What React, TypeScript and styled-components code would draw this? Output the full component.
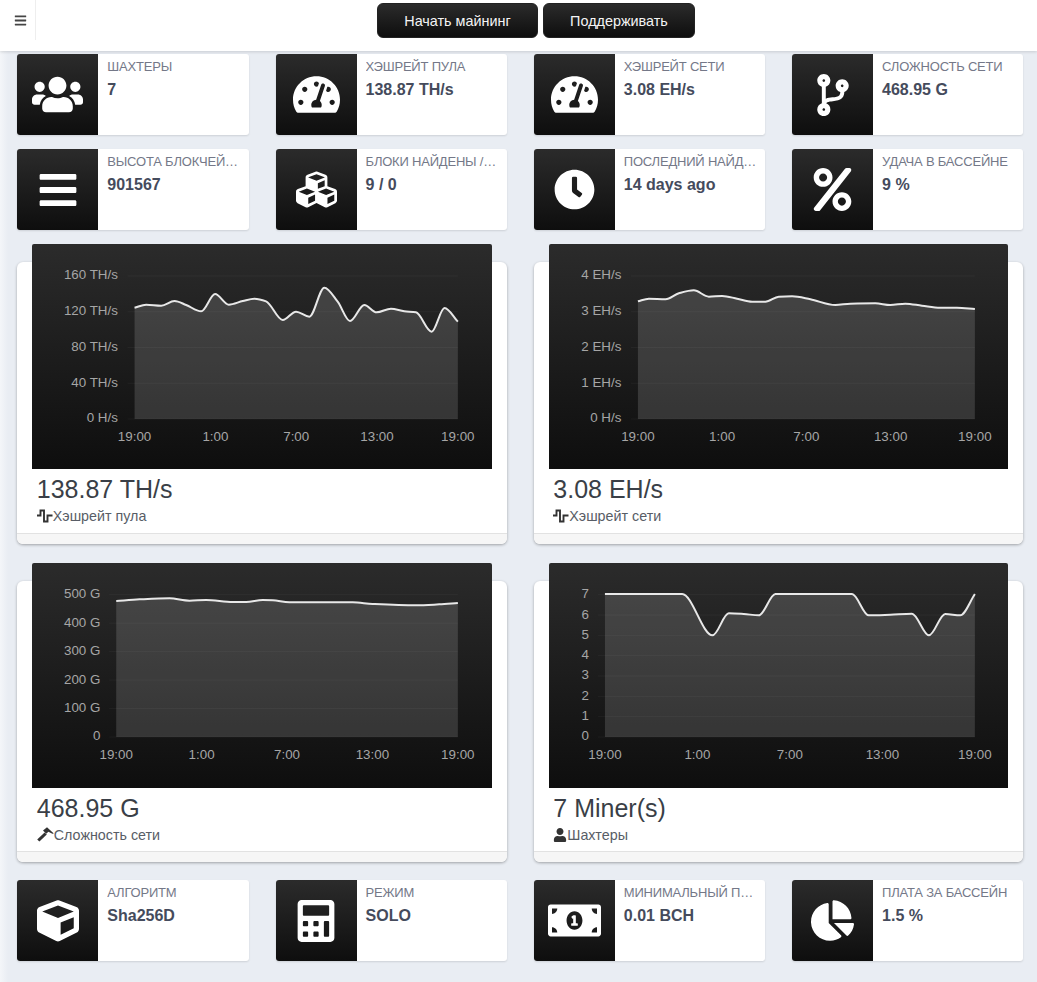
import React from "react";
import styled, { createGlobalStyle } from "styled-components";
import {
  FaBars,
  FaUsers,
  FaTachometerAlt,
  FaCodeBranch,
  FaCubes,
  FaClock,
  FaPercent,
  FaCube,
  FaCalculator,
  FaMoneyBillAlt,
  FaChartPie,
  FaUser,
} from "react-icons/fa";

// styles
const GlobalStyle = createGlobalStyle`
  html, body {
    margin: 0;
    padding: 0;
    min-height: 100%;
  }

  body {
    font-family: "Liberation Sans", Arial, sans-serif;
    background: linear-gradient(to right, #f4f6f9 0, #e9edf3 8px);
  }
`;

const Page = styled.div`
  min-height: 982px;
  display: flex;
  flex-direction: column;
`;

const Header = styled.header`
  height: 51px;
  display: flex;
  background: #fff;
  box-shadow: 0 1px 3px rgba(0, 0, 0, 0.14);
`;

const MenuToggle = styled.div`
  width: 36px;
  height: 40px;
  display: flex;
  align-items: flex-start;
  justify-content: center;
  box-sizing: border-box;
  padding: 14px 0 0 5px;
  color: #444;
  font-size: 13px;
  border-right: 1px solid #eee;
`;

const HeaderActions = styled.div`
  flex: 1;
  display: flex;
  justify-content: center;
  gap: 5px;
  padding: 3px 1px 0 0;
`;

const DarkButton = styled.button<{ $width: number }>`
  width: ${(p) => p.$width}px;
  height: 35px;
  border: 1px solid #222;
  border-radius: 6px;
  color: #f4f4f4;
  font-family: inherit;
  font-size: 14.4px;
  background: linear-gradient(to bottom, #2b2b2b, #0e0e0e);
`;

const Content = styled.main`
  padding: 3px 13.7px 0 17.3px;
`;

const StatGrid = styled.section<{ $top?: number }>`
  display: grid;
  grid-template-columns: repeat(4, 1fr);
  column-gap: 27px;
  row-gap: 14px;
  margin-top: ${(p) => p.$top ?? 0}px;
`;

const StatCard = styled.div`
  height: 81px;
  display: flex;
  background: #fff;
  border-radius: 3px;
  box-shadow: 0 1px 2px rgba(0, 0, 0, 0.12);
  overflow: hidden;
`;

const StatIcon = styled.div<{ $size: number }>`
  width: 81px;
  flex-shrink: 0;
  display: flex;
  align-items: center;
  justify-content: center;
  color: #fff;
  font-size: ${(p) => p.$size}px;
  background: linear-gradient(to bottom, #2b2b2b, #0e0e0e);
`;

const StatBody = styled.div`
  min-width: 0;
  flex: 1;
  padding: 5px 7px 0 9px;
`;

const StatLabel = styled.div`
  font-size: 13px;
  line-height: 16px;
  letter-spacing: -0.2px;
  text-transform: uppercase;
  color: #747888;
  white-space: nowrap;
  overflow: hidden;
  text-overflow: ellipsis;
`;

const StatValue = styled.div`
  margin-top: 5px;
  font-size: 16px;
  line-height: 19px;
  font-weight: bold;
  color: #454b5c;
`;

const ChartGrid = styled.section`
  display: grid;
  grid-template-columns: repeat(2, 1fr);
  column-gap: 27px;
  row-gap: 37px;
  margin-top: 32px;
`;

const ChartCard = styled.article`
  height: 281.5px;
  display: flex;
  flex-direction: column;
  background: #fff;
  border-radius: 6px;
  box-shadow: 0 1px 3px rgba(0, 0, 0, 0.32);
`;

const ChartPanel = styled.div`
  height: 225px;
  margin: -18px 15px 0;
  flex-shrink: 0;
  border-radius: 2px 2px 0 0;
  background: linear-gradient(to bottom, #2b2b2b, #0e0e0e);

  svg {
    display: block;
  }
`;

const ChartBody = styled.div`
  flex: 1;
  padding: 5px 19.5px 0;
`;

const ChartValue = styled.div`
  font-size: 25px;
  line-height: 30px;
  color: #3a3f47;
`;

const ChartCaption = styled.div`
  margin-top: 4px;
  display: flex;
  align-items: center;
  font-size: 14.3px;
  line-height: 16px;
  color: #585d66;

  svg {
    color: #333;
    flex-shrink: 0;
  }
`;

const ChartFooter = styled.div`
  height: 10px;
  border-top: 1px solid #e2e2e2;
  border-radius: 0 0 6px 6px;
  background: #f6f6f6;
`;

type Point = [number, number];

interface ChartProps {
  left: number;
  right: number;
  top: number;
  bottom: number;
  yLabels: string[];
  xLabels: string[];
  labelRight: number;
  line: Point[];
}

// monotone spline through the points, so the flat parts stay flat
const splinePath = (pts: Point[]) => {
  const n = pts.length;
  const slopes: number[] = [];
  for (let i = 0; i < n - 1; i++) {
    slopes.push((pts[i + 1][1] - pts[i][1]) / (pts[i + 1][0] - pts[i][0]));
  }
  const tangents = pts.map((_, i) => {
    if (i === 0) return slopes[0];
    if (i === n - 1) return slopes[n - 2];
    if (slopes[i - 1] * slopes[i] <= 0) return 0;
    return (2 * slopes[i - 1] * slopes[i]) / (slopes[i - 1] + slopes[i]);
  });
  let d = `M${pts[0][0]} ${pts[0][1]}`;
  for (let i = 0; i < n - 1; i++) {
    const h = (pts[i + 1][0] - pts[i][0]) / 3;
    d += `C${pts[i][0] + h} ${pts[i][1] + tangents[i] * h} ${pts[i + 1][0] - h} ${
      pts[i + 1][1] - tangents[i + 1] * h
    } ${pts[i + 1][0]} ${pts[i + 1][1]}`;
  }
  return d;
};

const LineChart = ({ left, right, top, bottom, yLabels, xLabels, labelRight, line }: ChartProps) => {
  const d = splinePath(line);
  const rows = yLabels.length - 1;
  const cols = xLabels.length - 1;
  const labelStyle = { fill: "#a6a6a6", fontSize: 13.4, fontFamily: "'Liberation Sans', Arial, sans-serif" };
  return (
    <svg width="100%" height="225" viewBox="0 0 460 225" preserveAspectRatio="none">
      {yLabels.map((label, i) => {
        const y = top + ((bottom - top) * i) / rows;
        return (
          <g key={label}>
            <line x1={left - 7} x2={right} y1={y} y2={y} stroke="rgba(255,255,255,0.045)" />
            <text x={labelRight} y={y + 3.5} textAnchor="end" style={labelStyle}>
              {label}
            </text>
          </g>
        );
      })}
      <path d={`${d}L${right} ${bottom}L${left} ${bottom}Z`} fill="rgba(255,255,255,0.14)" />
      <path d={d} fill="none" stroke="#e8e8e8" strokeWidth="2" />
      {xLabels.map((label, i) => (
        <text
          key={i}
          x={left + ((right - left) * i) / cols}
          y={bottom + 22}
          textAnchor="middle"
          style={labelStyle}
        >
          {label}
        </text>
      ))}
    </svg>
  );
};

const PulseIcon = () => (
  <svg width="16" height="14" viewBox="0 0 16 14" fill="none" stroke="currentColor" strokeWidth="1.9">
    <path d="M0 6.5H3.5V1.5H7V12.5H10.5V6.5H15.5" />
  </svg>
);

const HammerIcon = () => (
  <svg width="17" height="15" viewBox="0 0 17 15" fill="currentColor">
    <path d="M0.2 12.6L7.6 5.4L9.8 7.4L2.4 14.6Z" />
    <path d="M6 3.4L10 0.2L16.8 6.4L15.4 6.8L11.4 4.8L9.2 6.8Z" />
  </svg>
);

const xTicks = ["19:00", "1:00", "7:00", "13:00", "19:00"];

const toPanel = (raw: Point[], ox: number, oy: number): Point[] =>
  raw.map(([x, y]) => [(x - ox) / 3, (y - oy) / 3]);

const charts = [
  {
    value: "138.87 TH/s",
    caption: "Хэшрейт пула",
    icon: <PulseIcon />,
    chart: {
      left: 102.7,
      right: 426.3,
      top: 32,
      bottom: 175,
      labelRight: 86,
      yLabels: ["160 TH/s", "120 TH/s", "80 TH/s", "40 TH/s", "0 H/s"],
      xLabels: xTicks,
      line: toPanel(
        [
          [405, 203], [440, 194], [485, 197], [525, 183], [560, 195], [605, 214], [647, 162],
          [688, 194], [730, 183], [765, 176], [800, 184], [850, 240], [890, 215], [930, 230],
          [975, 143], [1015, 185], [1052, 243], [1095, 195], [1132, 217], [1175, 206],
          [1215, 214], [1250, 217], [1297, 275], [1336, 204], [1376, 245],
        ],
        97,
        12
      ),
    },
  },
  {
    value: "3.08 EH/s",
    caption: "Хэшрейт сети",
    icon: <PulseIcon />,
    chart: {
      left: 89,
      right: 426.3,
      top: 32,
      bottom: 175,
      labelRight: 72.5,
      yLabels: ["4 EH/s", "3 EH/s", "2 EH/s", "1 EH/s", "0 H/s"],
      xLabels: xTicks,
      line: toPanel(
        [
          [352, 184], [385, 176], [435, 178], [475, 160], [520, 151], [565, 170], [605, 168],
          [650, 176], [695, 185], [735, 185], [775, 170], [815, 169], [870, 178], [945, 195],
          [990, 191], [1065, 190], [1110, 195], [1155, 191], [1205, 197], [1260, 203],
          [1310, 203], [1364, 207],
        ],
        85,
        12
      ),
    },
  },
  {
    value: "468.95 G",
    caption: "Сложность сети",
    icon: <HammerIcon />,
    chart: {
      left: 84.3,
      right: 426.3,
      top: 31.7,
      bottom: 174,
      labelRight: 68.5,
      yLabels: ["500 G", "400 G", "300 G", "200 G", "100 G", "0"],
      xLabels: xTicks,
      line: toPanel(
        [
          [350, 137], [420, 132], [510, 129], [570, 136], [620, 134], [700, 140], [740, 140],
          [790, 134], [820, 135], [870, 141], [1060, 141], [1120, 146], [1250, 150],
          [1320, 147], [1376, 143],
        ],
        97,
        23
      ),
    },
  },
  {
    value: "7 Miner(s)",
    caption: "Шахтеры",
    icon: <FaUser size={14} />,
    chart: {
      left: 56,
      right: 426.3,
      top: 31.7,
      bottom: 174,
      labelRight: 40,
      yLabels: ["7", "6", "5", "4", "3", "2", "1", "0"],
      xLabels: xTicks,
      line: toPanel(
        [
          [253, 116], [485, 116], [576, 240], [625, 174], [670, 176], [715, 180], [765, 116],
          [995, 116], [1045, 180], [1110, 178], [1175, 175], [1226, 240], [1275, 176],
          [1320, 180], [1364, 116],
        ],
        85,
        23
      ),
    },
  },
];

const topStats = [
  { label: "Шахтеры", value: "7", icon: <FaUsers />, size: 51 },
  { label: "Хэшрейт пула", value: "138.87 TH/s", icon: <FaTachometerAlt />, size: 47 },
  { label: "Хэшрейт сети", value: "3.08 EH/s", icon: <FaTachometerAlt />, size: 47 },
  { label: "Сложность сети", value: "468.95 G", icon: <FaCodeBranch />, size: 42 },
  { label: "Высота блокчейна", value: "901567", icon: <FaBars />, size: 42 },
  { label: "Блоки найдены /ожидают", value: "9 / 0", icon: <FaCubes />, size: 41 },
  { label: "Последний найденный", value: "14 days ago", icon: <FaClock />, size: 41 },
  { label: "Удача в бассейне", value: "9 %", icon: <FaPercent />, size: 43 },
];

const bottomStats = [
  { label: "Алгоритм", value: "Sha256D", icon: <FaCube />, size: 42 },
  { label: "Режим", value: "SOLO", icon: <FaCalculator />, size: 42 },
  { label: "Минимальный платеж", value: "0.01 BCH", icon: <FaMoneyBillAlt />, size: 53 },
  { label: "Плата за бассейн", value: "1.5 %", icon: <FaChartPie />, size: 43 },
];

const renderStat = (stat: { label: string; value: string; icon: React.ReactNode; size: number }) => (
  <StatCard key={stat.label}>
    <StatIcon $size={stat.size}>{stat.icon}</StatIcon>
    <StatBody>
      <StatLabel>{stat.label}</StatLabel>
      <StatValue>{stat.value}</StatValue>
    </StatBody>
  </StatCard>
);

export default function App() {
  return (
    <Page>
      <GlobalStyle />
      <Header>
        <MenuToggle>
          <FaBars />
        </MenuToggle>
        <HeaderActions>
          <DarkButton $width={161}>Начать майнинг</DarkButton>
          <DarkButton $width={152}>Поддерживать</DarkButton>
        </HeaderActions>
      </Header>
      <Content>
        <StatGrid>{topStats.map(renderStat)}</StatGrid>
        <ChartGrid>
          {charts.map((item) => (
            <ChartCard key={item.caption}>
              <ChartPanel>
                <LineChart {...item.chart} />
              </ChartPanel>
              <ChartBody>
                <ChartValue>{item.value}</ChartValue>
                <ChartCaption>
                  {item.icon}
                  {item.caption}
                </ChartCaption>
              </ChartBody>
              <ChartFooter />
            </ChartCard>
          ))}
        </ChartGrid>
        <StatGrid $top={18}>{bottomStats.map(renderStat)}</StatGrid>
      </Content>
    </Page>
  );
}
